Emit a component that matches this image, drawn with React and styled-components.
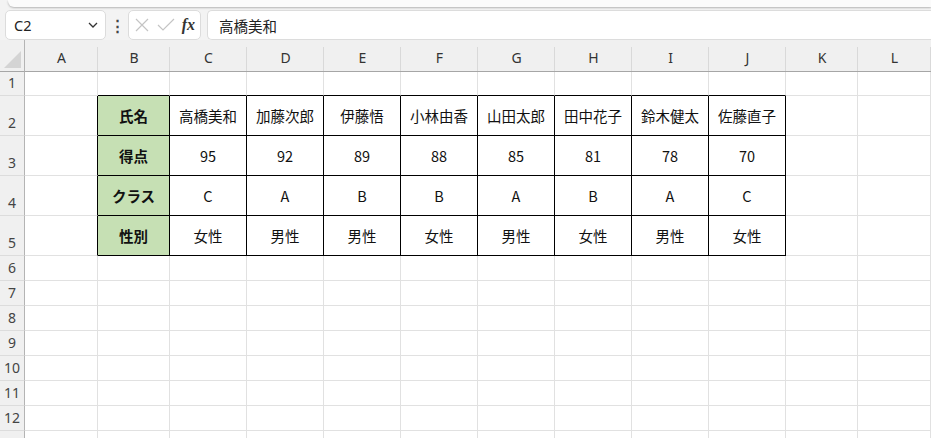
import React from "react";
import styled, { createGlobalStyle } from "styled-components";

const GlobalStyle = createGlobalStyle`
  html, body {
    margin: 0;
    padding: 0;
    background: #f3f3f3;
    font-family: "Noto Sans", "Noto Sans CJK JP", sans-serif;
    overflow: hidden;
  }
`;

const COLS = ["A", "B", "C", "D", "E", "F", "G", "H", "I", "J", "K", "L"];
const ROW_COUNT = 13;
const LABELLED_ROWS = 12;

const table = [
  ["氏名", "高橋美和", "加藤次郎", "伊藤悟", "小林由香", "山田太郎", "田中花子", "鈴木健太", "佐藤直子"],
  ["得点", "95", "92", "89", "88", "85", "81", "78", "70"],
  ["クラス", "C", "A", "B", "B", "A", "B", "A", "C"],
  ["性別", "女性", "男性", "男性", "女性", "男性", "女性", "男性", "女性"],
];

const Page = styled.div`
  width: 931px;
  height: 438px;
  overflow: hidden;
  background: #f3f3f3;
`;

const Ribbon = styled.div`
  height: 7px;
  margin-left: 8px;
  background: #fbfbfb;
  border-bottom-left-radius: 6px;
  box-shadow: 0 1px 2px rgba(0, 0, 0, 0.25);
`;

const FormulaBar = styled.div`
  display: flex;
  align-items: center;
  height: 30px;
  margin-top: 3px;
  padding-left: 5px;
`;

const NameBox = styled.div`
  display: flex;
  align-items: center;
  justify-content: space-between;
  box-sizing: border-box;
  width: 101px;
  height: 30px;
  padding: 0 6px 0 8px;
  background: #fff;
  border: 1px solid #dcdcdc;
  border-radius: 5px;
  font-size: 14.5px;
  color: #222;
`;

const Dots = styled.div`
  width: 22px;
  text-align: center;
  font-size: 15px;
  font-weight: bold;
  color: #444;
  line-height: 1;
`;

const FxBox = styled.div`
  display: flex;
  align-items: center;
  justify-content: space-between;
  box-sizing: border-box;
  width: 73px;
  height: 30px;
  padding: 0 5px;
  background: #fff;
  border: 1px solid #dcdcdc;
  border-radius: 5px;
`;

const Fx = styled.span`
  font-family: "Liberation Serif", serif;
  font-style: italic;
  font-weight: bold;
  font-size: 16px;
  color: #333;
`;

const FormulaInput = styled.div`
  flex: 1;
  display: flex;
  align-items: center;
  box-sizing: border-box;
  height: 30px;
  margin-left: 6px;
  padding-left: 11px;
  background: #fff;
  border: 1px solid #dcdcdc;
  border-right: none;
  border-radius: 5px 0 0 5px;
  font-family: "Noto Sans CJK JP", sans-serif;
  font-size: 14.5px;
  color: #222;
`;

const Sheet = styled.div`
  display: grid;
  grid-template-columns: 25px 73px 72px repeat(8, 77px) 72px 73px;
  grid-template-rows: 32px 24px repeat(4, 40px) repeat(8, 25px);
  background: #fff;
`;

const Corner = styled.div`
  box-sizing: border-box;
  background: #f0f0f0;
  border-right: 1px solid #b4b4b4;
  border-bottom: 1px solid #a6a6a6;
  display: flex;
  align-items: flex-end;
  justify-content: flex-end;
  padding: 0 3px 3px 0;
`;

const ColHeader = styled.div`
  box-sizing: border-box;
  display: flex;
  align-items: center;
  justify-content: center;
  padding-top: 3px;
  background: linear-gradient(#d9d9d9, #d9d9d9) right 7px / 1px calc(100% - 7px)
      no-repeat,
    #f0f0f0;
  border-bottom: 1px solid #a6a6a6;
  font-size: 14px;
  color: #333;
`;

const RowHeader = styled.div`
  box-sizing: border-box;
  display: flex;
  align-items: ${(p) => (p.$tall ? "flex-end" : "center")};
  justify-content: center;
  padding-bottom: ${(p) => (p.$tall ? "3px" : "0")};
  background: #f0f0f0;
  border-right: 1px solid #b4b4b4;
  border-bottom: 1px solid #dcdcdc;
  font-size: 14px;
  color: #444;
  line-height: 1.2;
`;

const Cell = styled.div`
  box-sizing: border-box;
  display: flex;
  align-items: center;
  justify-content: center;
  background: ${(p) => (p.$head ? "#c6e0b4" : "#fff")};
  border-right: 1px solid ${(p) => (p.$blackRight ? "#000" : "#e1e1e1")};
  border-bottom: 1px solid ${(p) => (p.$blackBottom ? "#000" : "#e1e1e1")};
  font-family: "Noto Sans CJK JP", sans-serif;
  font-size: 14.5px;
  font-weight: ${(p) => (p.$head ? 700 : 400)};
  color: #111;
  white-space: nowrap;
  overflow: hidden;
`;

const Chevron = () => (
  <svg width="12" height="12" viewBox="0 0 12 12">
    <path d="M2 4 L6 8 L10 4" fill="none" stroke="#333" strokeWidth="1.3" />
  </svg>
);

const Cross = () => (
  <svg width="16" height="16" viewBox="0 0 16 16">
    <path d="M2 2 L14 14 M14 2 L2 14" stroke="#c4c4c4" strokeWidth="1.2" />
  </svg>
);

const Check = () => (
  <svg width="18" height="16" viewBox="0 0 18 16">
    <path d="M1 8 L6 13 L17 2" fill="none" stroke="#c4c4c4" strokeWidth="1.2" />
  </svg>
);

const CornerTriangle = () => (
  <svg width="17" height="17" viewBox="0 0 17 17">
    <polygon points="17,0 17,17 0,17" fill="#d4d4d4" />
  </svg>
);

const App = () => {
  const rows = [];
  for (let r = 1; r <= ROW_COUNT; r++) {
    const inRows = r >= 2 && r <= 5;
    rows.push(
      <RowHeader key={`rh${r}`} $tall={inRows}>
        {r <= LABELLED_ROWS ? r : ""}
      </RowHeader>
    );
    COLS.forEach((_, c) => {
      const inCols = c >= 1 && c <= 9;
      const inTable = inRows && inCols;
      const text = inTable ? table[r - 2][c - 1] : "";
      rows.push(
        <Cell
          key={`${r}-${c}`}
          $head={inTable && c === 1}
          $blackRight={inTable || (inRows && c === 0)}
          $blackBottom={inTable || (r === 1 && inCols)}
        >
          {text}
        </Cell>
      );
    });
  }

  return (
    <>
      <GlobalStyle />
      <Page>
        <Ribbon />
        <FormulaBar>
          <NameBox>
            <span>C2</span>
            <Chevron />
          </NameBox>
          <Dots>⋮</Dots>
          <FxBox>
            <Cross />
            <Check />
            <Fx>fx</Fx>
          </FxBox>
          <FormulaInput>高橋美和</FormulaInput>
        </FormulaBar>
        <Sheet>
          <Corner>
            <CornerTriangle />
          </Corner>
          {COLS.map((c) => (
            <ColHeader key={c}>{c}</ColHeader>
          ))}
          {rows}
        </Sheet>
      </Page>
    </>
  );
};

export default App;
